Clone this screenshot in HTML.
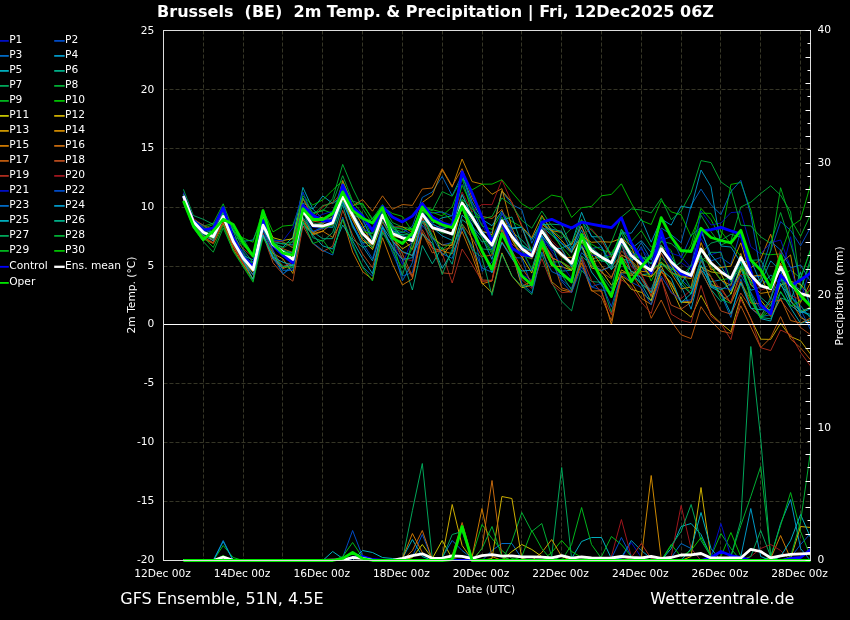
<!DOCTYPE html><html><head><meta charset="utf-8"><title>Brussels (BE) 2m Temp. &amp; Precipitation</title>
<style>html,body{margin:0;padding:0;background:#000;}svg{display:block}text{font-family:"DejaVu Sans","Liberation Sans",sans-serif;fill:#fff}svg{will-change:transform;opacity:.9999}</style></head><body>
<svg width="850" height="620" viewBox="0 0 850 620">
<rect width="850" height="620" fill="#000"/>
<path d="M203.50 30.5V560.5M243.50 30.5V560.5M282.50 30.5V560.5M322.50 30.5V560.5M362.50 30.5V560.5M402.50 30.5V560.5M442.50 30.5V560.5M482.50 30.5V560.5M521.50 30.5V560.5M561.50 30.5V560.5M601.50 30.5V560.5M641.50 30.5V560.5M681.50 30.5V560.5M720.50 30.5V560.5M760.50 30.5V560.5M800.50 30.5V560.5M163.5 501.50H810.5M163.5 442.50H810.5M163.5 383.50H810.5M163.5 266.50H810.5M163.5 207.50H810.5M163.5 148.50H810.5M163.5 89.50H810.5" stroke="#363627" stroke-width="1" stroke-dasharray="4 2" fill="none"/>
<defs><clipPath id="cp"><rect x="163.5" y="30" width="647" height="530.5"/></clipPath></defs>
<g clip-path="url(#cp)" fill="none" stroke-linejoin="round">
<path d="M183.4 196.5L193.4 221.2L203.3 232.0L213.3 236.2L223.2 216.2L233.2 241.0L243.1 255.3L253.1 268.1L263.0 223.2L273.0 243.7L282.9 254.1L292.9 259.4L302.9 212.0L312.8 227.1L322.8 228.8L332.7 226.8L342.7 202.0L352.6 224.9L362.6 243.2L372.5 242.6L382.5 211.2L392.4 229.2L402.4 236.5L412.4 237.7L422.3 210.7L432.3 219.6L442.2 227.6L452.2 223.6L462.1 184.1L472.1 203.7L482.0 224.5L492.0 243.0L501.9 229.1L511.9 256.7L521.8 274.8L531.8 279.7L541.8 235.6L551.7 249.9L561.7 255.2L571.6 265.7L581.6 234.8L591.5 251.8L601.5 258.0L611.4 253.8L621.4 244.1L631.3 251.1L641.3 268.2L651.2 276.0L661.2 252.9L671.2 268.2L681.1 262.6L691.1 269.6L701.0 238.4L711.0 254.8L720.9 251.4L730.9 290.2L740.8 254.1L750.8 282.5L760.7 279.5L770.7 285.0L780.6 277.5L790.6 236.7L800.6 285.7L810.5 303.6" stroke="#0010d0" stroke-width="0.88"/>
<path d="M183.4 560.5L193.4 560.5L203.3 560.5L213.3 560.5L223.2 560.5L233.2 560.5L243.1 560.5L253.1 560.5L263.0 560.5L273.0 560.5L282.9 560.5L292.9 560.5L302.9 560.5L312.8 560.5L322.8 560.5L332.7 560.5L342.7 560.5L352.6 560.5L362.6 560.5L372.5 560.5L382.5 560.5L392.4 560.5L402.4 560.5L412.4 560.5L422.3 560.5L432.3 560.5L442.2 560.5L452.2 560.5L462.1 560.5L472.1 560.5L482.0 560.5L492.0 560.5L501.9 560.5L511.9 560.5L521.8 560.5L531.8 560.5L541.8 560.5L551.7 560.5L561.7 560.5L571.6 560.5L581.6 560.5L591.5 560.5L601.5 560.5L611.4 560.5L621.4 558.5L631.3 542.5L641.3 557.5L651.2 560.5L661.2 560.5L671.2 560.5L681.1 560.5L691.1 560.5L701.0 560.5L711.0 560.5L720.9 560.5L730.9 560.5L740.8 560.5L750.8 560.5L760.7 560.5L770.7 560.5L780.6 560.5L790.6 560.5L800.6 560.5L810.5 560.5" stroke="#0010d0" stroke-width="0.95"/>
<path d="M183.4 197.5L193.4 222.6L203.3 232.8L213.3 239.1L223.2 216.8L233.2 242.1L243.1 258.1L253.1 271.5L263.0 231.2L273.0 245.5L282.9 253.9L292.9 259.4L302.9 219.2L312.8 232.1L322.8 226.5L332.7 227.5L342.7 201.3L352.6 224.0L362.6 242.8L372.5 258.6L382.5 225.2L392.4 252.5L402.4 276.1L412.4 272.6L422.3 225.0L432.3 238.8L442.2 245.0L452.2 242.5L462.1 206.4L472.1 224.5L482.0 271.4L492.0 262.1L501.9 242.4L511.9 257.4L521.8 258.0L531.8 287.2L541.8 243.2L551.7 255.0L561.7 279.8L571.6 288.3L581.6 258.1L591.5 287.0L601.5 290.0L611.4 291.9L621.4 261.7L631.3 262.4L641.3 246.7L651.2 270.0L661.2 240.8L671.2 236.5L681.1 257.9L691.1 235.4L701.0 227.3L711.0 260.9L720.9 257.4L730.9 264.4L740.8 231.3L750.8 277.1L760.7 276.4L770.7 251.0L780.6 221.6L790.6 230.3L800.6 245.8L810.5 227.5" stroke="#0050d0" stroke-width="0.88"/>
<path d="M183.4 560.5L193.4 560.5L203.3 560.5L213.3 560.5L223.2 560.5L233.2 560.5L243.1 560.5L253.1 560.5L263.0 560.5L273.0 560.5L282.9 560.5L292.9 560.5L302.9 560.5L312.8 560.5L322.8 560.5L332.7 560.5L342.7 557.5L352.6 530.5L362.6 556.5L372.5 560.5L382.5 560.5L392.4 560.5L402.4 560.5L412.4 556.5L422.3 534.5L432.3 559.5L442.2 560.5L452.2 560.5L462.1 560.5L472.1 560.5L482.0 560.5L492.0 560.5L501.9 560.5L511.9 560.5L521.8 560.5L531.8 560.5L541.8 560.5L551.7 560.5L561.7 560.5L571.6 560.5L581.6 560.5L591.5 560.5L601.5 560.5L611.4 560.5L621.4 560.5L631.3 560.5L641.3 560.5L651.2 560.5L661.2 560.5L671.2 560.5L681.1 560.5L691.1 560.5L701.0 560.5L711.0 560.5L720.9 560.5L730.9 560.5L740.8 560.5L750.8 560.5L760.7 560.5L770.7 560.5L780.6 560.5L790.6 557.5L800.6 544.5L810.5 533.5" stroke="#0050d0" stroke-width="0.95"/>
<path d="M183.4 196.0L193.4 221.2L203.3 231.8L213.3 235.3L223.2 215.3L233.2 239.8L243.1 258.1L253.1 262.3L263.0 222.1L273.0 246.3L282.9 252.3L292.9 252.7L302.9 209.3L312.8 219.9L322.8 218.0L332.7 219.4L342.7 195.7L352.6 212.7L362.6 229.2L372.5 237.7L382.5 213.1L392.4 231.0L402.4 232.7L412.4 226.3L422.3 197.4L432.3 192.0L442.2 176.4L452.2 195.7L462.1 174.6L472.1 206.2L482.0 232.5L492.0 232.3L501.9 191.2L511.9 204.5L521.8 209.7L531.8 243.3L541.8 221.2L551.7 232.2L561.7 243.2L571.6 249.4L581.6 226.4L591.5 248.4L601.5 246.9L611.4 268.6L621.4 244.6L631.3 262.7L641.3 284.3L651.2 289.2L661.2 264.1L671.2 267.7L681.1 279.3L691.1 288.7L701.0 259.8L711.0 283.1L720.9 294.2L730.9 317.4L740.8 278.8L750.8 308.1L760.7 316.8L770.7 314.7L780.6 279.1L790.6 283.2L800.6 315.8L810.5 326.3" stroke="#0070d0" stroke-width="0.88"/>
<path d="M183.4 560.5L193.4 560.5L203.3 560.5L213.3 560.5L223.2 540.5L233.2 560.5L243.1 560.5L253.1 560.5L263.0 560.5L273.0 560.5L282.9 560.5L292.9 560.5L302.9 560.5L312.8 560.5L322.8 560.5L332.7 560.5L342.7 560.5L352.6 560.5L362.6 560.5L372.5 560.5L382.5 560.5L392.4 560.5L402.4 560.5L412.4 560.5L422.3 560.5L432.3 560.5L442.2 560.5L452.2 560.5L462.1 560.5L472.1 560.5L482.0 560.5L492.0 550.5L501.9 543.5L511.9 543.5L521.8 558.5L531.8 560.5L541.8 560.5L551.7 560.5L561.7 560.5L571.6 560.5L581.6 560.5L591.5 560.5L601.5 560.5L611.4 560.5L621.4 560.5L631.3 560.5L641.3 560.5L651.2 560.5L661.2 560.5L671.2 557.5L681.1 543.5L691.1 548.5L701.0 560.5L711.0 560.5L720.9 560.5L730.9 560.5L740.8 560.5L750.8 560.5L760.7 560.5L770.7 560.5L780.6 560.5L790.6 560.5L800.6 560.5L810.5 560.5" stroke="#0070d0" stroke-width="0.95"/>
<path d="M183.4 194.7L193.4 219.9L203.3 225.1L213.3 233.2L223.2 209.6L233.2 231.3L243.1 241.4L253.1 240.0L263.0 215.9L273.0 241.6L282.9 243.8L292.9 245.0L302.9 202.9L312.8 209.1L322.8 219.0L332.7 212.6L342.7 191.2L352.6 213.6L362.6 228.4L372.5 218.1L382.5 208.2L392.4 230.3L402.4 237.9L412.4 236.4L422.3 214.1L432.3 227.4L442.2 235.9L452.2 240.4L462.1 206.5L472.1 226.4L482.0 237.3L492.0 259.4L501.9 221.7L511.9 237.9L521.8 245.7L531.8 250.8L541.8 227.0L551.7 235.0L561.7 243.7L571.6 252.8L581.6 230.2L591.5 251.4L601.5 261.0L611.4 262.0L621.4 229.4L631.3 248.7L641.3 240.7L651.2 252.4L661.2 237.0L671.2 262.7L681.1 286.0L691.1 309.2L701.0 269.7L711.0 281.9L720.9 279.8L730.9 291.1L740.8 267.0L750.8 290.3L760.7 287.0L770.7 274.9L780.6 285.0L790.6 296.6L800.6 305.8L810.5 318.1" stroke="#00a0d0" stroke-width="0.88"/>
<path d="M183.4 560.5L193.4 560.5L203.3 560.5L213.3 560.5L223.2 560.5L233.2 560.5L243.1 560.5L253.1 560.5L263.0 560.5L273.0 560.5L282.9 560.5L292.9 560.5L302.9 560.5L312.8 560.5L322.8 560.5L332.7 560.5L342.7 560.5L352.6 560.5L362.6 560.5L372.5 560.5L382.5 560.5L392.4 560.5L402.4 560.5L412.4 560.5L422.3 560.5L432.3 560.5L442.2 560.5L452.2 560.5L462.1 560.5L472.1 560.5L482.0 560.5L492.0 560.5L501.9 560.5L511.9 560.5L521.8 560.5L531.8 560.5L541.8 560.5L551.7 560.5L561.7 560.5L571.6 560.5L581.6 560.5L591.5 560.5L601.5 560.5L611.4 560.5L621.4 557.5L631.3 540.5L641.3 550.5L651.2 558.5L661.2 560.5L671.2 560.5L681.1 560.5L691.1 560.5L701.0 560.5L711.0 560.5L720.9 560.5L730.9 560.5L740.8 560.5L750.8 560.5L760.7 560.5L770.7 557.5L780.6 523.5L790.6 499.5L800.6 548.5L810.5 560.5" stroke="#00a0d0" stroke-width="0.95"/>
<path d="M183.4 195.7L193.4 222.6L203.3 232.7L213.3 237.2L223.2 215.2L233.2 240.2L243.1 255.7L253.1 269.4L263.0 224.2L273.0 243.6L282.9 247.1L292.9 237.1L302.9 187.4L312.8 209.0L322.8 196.0L332.7 203.5L342.7 195.6L352.6 216.4L362.6 233.7L372.5 243.4L382.5 211.7L392.4 224.9L402.4 237.7L412.4 238.6L422.3 213.3L432.3 223.1L442.2 217.8L452.2 215.7L462.1 173.7L472.1 201.7L482.0 219.3L492.0 225.7L501.9 211.0L511.9 228.9L521.8 227.3L531.8 239.5L541.8 221.3L551.7 231.5L561.7 247.9L571.6 243.8L581.6 212.3L591.5 236.7L601.5 236.9L611.4 255.6L621.4 244.2L631.3 272.8L641.3 284.0L651.2 301.1L661.2 263.8L671.2 270.3L681.1 284.9L691.1 265.2L701.0 231.4L711.0 254.6L720.9 266.5L730.9 281.7L740.8 262.0L750.8 298.8L760.7 318.6L770.7 321.0L780.6 291.8L790.6 307.9L800.6 323.4L810.5 319.7" stroke="#00b8c8" stroke-width="0.88"/>
<path d="M183.4 560.5L193.4 560.5L203.3 560.5L213.3 560.5L223.2 560.5L233.2 560.5L243.1 560.5L253.1 560.5L263.0 560.5L273.0 560.5L282.9 560.5L292.9 560.5L302.9 560.5L312.8 560.5L322.8 560.5L332.7 551.5L342.7 558.5L352.6 560.5L362.6 560.5L372.5 560.5L382.5 560.5L392.4 560.5L402.4 558.5L412.4 539.5L422.3 556.5L432.3 560.5L442.2 560.5L452.2 560.5L462.1 560.5L472.1 560.5L482.0 560.5L492.0 560.5L501.9 560.5L511.9 560.5L521.8 560.5L531.8 560.5L541.8 560.5L551.7 560.5L561.7 560.5L571.6 558.5L581.6 541.5L591.5 537.5L601.5 537.5L611.4 558.5L621.4 560.5L631.3 560.5L641.3 560.5L651.2 560.5L661.2 560.5L671.2 548.5L681.1 526.5L691.1 523.5L701.0 534.5L711.0 556.5L720.9 560.5L730.9 560.5L740.8 560.5L750.8 560.5L760.7 560.5L770.7 560.5L780.6 560.5L790.6 560.5L800.6 560.5L810.5 560.5" stroke="#00b8c8" stroke-width="0.95"/>
<path d="M183.4 194.5L193.4 219.6L203.3 227.8L213.3 234.0L223.2 215.5L233.2 240.9L243.1 257.6L253.1 269.6L263.0 228.2L273.0 252.0L282.9 274.4L292.9 264.4L302.9 217.4L312.8 231.6L322.8 238.8L332.7 238.6L342.7 204.5L352.6 239.0L362.6 247.2L372.5 244.6L382.5 215.0L392.4 233.3L402.4 259.3L412.4 290.0L422.3 245.5L432.3 263.8L442.2 247.2L452.2 264.2L462.1 219.7L472.1 227.1L482.0 242.0L492.0 240.0L501.9 221.0L511.9 231.7L521.8 239.9L531.8 251.0L541.8 225.6L551.7 244.2L561.7 271.1L571.6 270.3L581.6 241.3L591.5 259.1L601.5 256.6L611.4 269.5L621.4 258.9L631.3 261.1L641.3 274.8L651.2 273.5L661.2 245.5L671.2 263.7L681.1 284.3L691.1 294.2L701.0 271.4L711.0 289.5L720.9 301.5L730.9 294.1L740.8 268.2L750.8 293.1L760.7 317.5L770.7 318.8L780.6 297.9L790.6 301.6L800.6 310.3L810.5 316.3" stroke="#00b890" stroke-width="0.88"/>
<path d="M183.4 196.1L193.4 222.0L203.3 234.1L213.3 236.6L223.2 212.1L233.2 228.0L243.1 249.7L253.1 262.4L263.0 222.2L273.0 243.5L282.9 250.7L292.9 260.6L302.9 204.4L312.8 222.8L322.8 225.7L332.7 227.4L342.7 195.7L352.6 227.3L362.6 242.6L372.5 243.0L382.5 213.8L392.4 231.3L402.4 235.0L412.4 240.3L422.3 222.6L432.3 228.3L442.2 230.4L452.2 234.9L462.1 208.1L472.1 233.2L482.0 249.0L492.0 249.7L501.9 227.0L511.9 253.5L521.8 285.7L531.8 294.5L541.8 253.7L551.7 282.5L561.7 301.2L571.6 310.9L581.6 270.3L591.5 281.5L601.5 282.4L611.4 312.5L621.4 272.7L631.3 274.0L641.3 284.3L651.2 291.7L661.2 257.6L671.2 268.8L681.1 271.4L691.1 276.0L701.0 253.3L711.0 243.1L720.9 240.4L730.9 234.2L740.8 237.1L750.8 260.3L760.7 259.8L770.7 280.5L780.6 258.2L790.6 283.2L800.6 289.9L810.5 259.3" stroke="#00b060" stroke-width="0.88"/>
<path d="M183.4 560.5L193.4 560.5L203.3 560.5L213.3 560.5L223.2 560.5L233.2 560.5L243.1 560.5L253.1 560.5L263.0 560.5L273.0 560.5L282.9 560.5L292.9 560.5L302.9 560.5L312.8 560.5L322.8 560.5L332.7 560.5L342.7 560.5L352.6 560.5L362.6 560.5L372.5 560.5L382.5 560.5L392.4 560.5L402.4 560.5L412.4 510.5L422.3 463.5L432.3 558.5L442.2 560.5L452.2 560.5L462.1 560.5L472.1 560.5L482.0 560.5L492.0 560.5L501.9 560.5L511.9 560.5L521.8 560.5L531.8 560.5L541.8 560.5L551.7 556.5L561.7 467.5L571.6 558.5L581.6 560.5L591.5 560.5L601.5 560.5L611.4 560.5L621.4 560.5L631.3 560.5L641.3 560.5L651.2 560.5L661.2 560.5L671.2 560.5L681.1 560.5L691.1 560.5L701.0 560.5L711.0 560.5L720.9 560.5L730.9 556.5L740.8 520.5L750.8 346.5L760.7 438.5L770.7 556.5L780.6 560.5L790.6 560.5L800.6 560.5L810.5 560.5" stroke="#00b060" stroke-width="0.95"/>
<path d="M183.4 201.9L193.4 228.0L203.3 241.6L213.3 252.2L223.2 228.0L233.2 250.3L243.1 265.7L253.1 280.9L263.0 230.0L273.0 242.7L282.9 248.0L292.9 241.8L302.9 192.0L312.8 215.3L322.8 205.6L332.7 202.8L342.7 175.7L352.6 201.0L362.6 204.5L372.5 218.7L382.5 204.5L392.4 222.5L402.4 227.1L412.4 228.7L422.3 207.4L432.3 210.6L442.2 191.6L452.2 196.2L462.1 178.2L472.1 213.5L482.0 234.8L492.0 251.9L501.9 223.2L511.9 237.8L521.8 245.3L531.8 251.6L541.8 217.1L551.7 229.8L561.7 238.2L571.6 228.2L581.6 220.3L591.5 230.1L601.5 241.0L611.4 255.7L621.4 232.9L631.3 255.0L641.3 258.4L651.2 256.4L661.2 241.2L671.2 243.6L681.1 252.1L691.1 250.0L701.0 215.3L711.0 231.7L720.9 245.0L730.9 240.9L740.8 207.0L750.8 202.2L760.7 193.5L770.7 185.8L780.6 195.2L790.6 211.9L800.6 288.7L810.5 262.9" stroke="#00b838" stroke-width="0.88"/>
<path d="M183.4 560.5L193.4 560.5L203.3 560.5L213.3 560.5L223.2 560.5L233.2 560.5L243.1 560.5L253.1 560.5L263.0 560.5L273.0 560.5L282.9 560.5L292.9 560.5L302.9 560.5L312.8 560.5L322.8 560.5L332.7 560.5L342.7 560.5L352.6 560.5L362.6 560.5L372.5 560.5L382.5 560.5L392.4 560.5L402.4 560.5L412.4 560.5L422.3 560.5L432.3 560.5L442.2 560.5L452.2 560.5L462.1 560.5L472.1 560.5L482.0 560.5L492.0 560.5L501.9 560.5L511.9 541.5L521.8 512.5L531.8 531.5L541.8 523.5L551.7 556.5L561.7 560.5L571.6 560.5L581.6 560.5L591.5 560.5L601.5 560.5L611.4 560.5L621.4 560.5L631.3 560.5L641.3 560.5L651.2 560.5L661.2 560.5L671.2 560.5L681.1 560.5L691.1 560.5L701.0 560.5L711.0 560.5L720.9 560.5L730.9 556.5L740.8 525.5L750.8 496.5L760.7 466.5L770.7 556.5L780.6 560.5L790.6 560.5L800.6 560.5L810.5 560.5" stroke="#00b838" stroke-width="0.95"/>
<path d="M183.4 195.2L193.4 220.6L203.3 226.3L213.3 223.2L223.2 203.8L233.2 230.0L243.1 245.5L253.1 254.3L263.0 217.8L273.0 239.8L282.9 241.9L292.9 247.8L302.9 208.0L312.8 214.1L322.8 209.8L332.7 213.5L342.7 182.0L352.6 201.6L362.6 214.0L372.5 238.6L382.5 207.4L392.4 227.5L402.4 237.1L412.4 241.2L422.3 209.9L432.3 229.3L442.2 230.0L452.2 224.0L462.1 194.6L472.1 216.1L482.0 218.1L492.0 237.1L501.9 217.0L511.9 237.0L521.8 255.2L531.8 259.0L541.8 231.1L551.7 246.7L561.7 257.2L571.6 265.3L581.6 245.8L591.5 262.1L601.5 259.8L611.4 265.4L621.4 229.2L631.3 241.4L641.3 230.6L651.2 247.0L661.2 241.5L671.2 250.5L681.1 280.6L691.1 293.5L701.0 260.8L711.0 276.4L720.9 299.1L730.9 303.4L740.8 282.2L750.8 299.3L760.7 317.8L770.7 305.3L780.6 277.1L790.6 270.1L800.6 278.1L810.5 249.5" stroke="#00c020" stroke-width="0.88"/>
<path d="M183.4 560.5L193.4 560.5L203.3 560.5L213.3 560.5L223.2 545.5L233.2 557.5L243.1 560.5L253.1 560.5L263.0 560.5L273.0 560.5L282.9 560.5L292.9 560.5L302.9 560.5L312.8 560.5L322.8 560.5L332.7 560.5L342.7 556.5L352.6 542.5L362.6 557.5L372.5 560.5L382.5 560.5L392.4 560.5L402.4 560.5L412.4 560.5L422.3 560.5L432.3 560.5L442.2 560.5L452.2 560.5L462.1 560.5L472.1 556.5L482.0 524.5L492.0 538.5L501.9 550.5L511.9 558.5L521.8 560.5L531.8 560.5L541.8 560.5L551.7 560.5L561.7 560.5L571.6 544.5L581.6 507.5L591.5 544.5L601.5 558.5L611.4 560.5L621.4 560.5L631.3 560.5L641.3 560.5L651.2 560.5L661.2 560.5L671.2 560.5L681.1 560.5L691.1 560.5L701.0 560.5L711.0 556.5L720.9 533.5L730.9 548.5L740.8 560.5L750.8 560.5L760.7 560.5L770.7 556.5L780.6 525.5L790.6 492.5L800.6 531.5L810.5 556.5" stroke="#00c020" stroke-width="0.95"/>
<path d="M183.4 194.9L193.4 220.8L203.3 228.6L213.3 224.5L223.2 211.6L233.2 231.0L243.1 238.0L253.1 242.2L263.0 209.7L273.0 231.9L282.9 226.1L292.9 225.1L302.9 196.0L312.8 205.0L322.8 199.9L332.7 190.0L342.7 180.6L352.6 205.5L362.6 203.2L372.5 220.3L382.5 206.7L392.4 213.5L402.4 216.4L412.4 231.5L422.3 205.8L432.3 209.7L442.2 212.2L452.2 220.4L462.1 185.3L472.1 206.2L482.0 225.9L492.0 229.4L501.9 213.1L511.9 221.5L521.8 227.0L531.8 250.6L541.8 222.8L551.7 234.4L561.7 246.6L571.6 258.3L581.6 235.5L591.5 244.1L601.5 250.1L611.4 252.6L621.4 238.8L631.3 251.2L641.3 258.9L651.2 281.0L661.2 261.9L671.2 269.9L681.1 261.7L691.1 244.8L701.0 208.4L711.0 219.7L720.9 238.2L730.9 184.4L740.8 182.5L750.8 210.1L760.7 253.4L770.7 254.7L780.6 253.9L790.6 226.8L800.6 219.6L810.5 184.8" stroke="#00cc00" stroke-width="0.88"/>
<path d="M183.4 560.5L193.4 560.5L203.3 560.5L213.3 560.5L223.2 555.5L233.2 560.5L243.1 560.5L253.1 560.5L263.0 560.5L273.0 560.5L282.9 560.5L292.9 560.5L302.9 560.5L312.8 560.5L322.8 560.5L332.7 560.5L342.7 560.5L352.6 560.5L362.6 560.5L372.5 560.5L382.5 560.5L392.4 560.5L402.4 560.5L412.4 560.5L422.3 560.5L432.3 560.5L442.2 560.5L452.2 560.5L462.1 560.5L472.1 560.5L482.0 560.5L492.0 560.5L501.9 560.5L511.9 560.5L521.8 560.5L531.8 560.5L541.8 560.5L551.7 552.5L561.7 540.5L571.6 551.5L581.6 557.5L591.5 560.5L601.5 560.5L611.4 560.5L621.4 560.5L631.3 560.5L641.3 560.5L651.2 560.5L661.2 560.5L671.2 560.5L681.1 560.5L691.1 560.5L701.0 560.5L711.0 560.5L720.9 556.5L730.9 532.5L740.8 556.5L750.8 560.5L760.7 560.5L770.7 560.5L780.6 560.5L790.6 560.5L800.6 560.5L810.5 560.5" stroke="#00cc00" stroke-width="0.95"/>
<path d="M183.4 199.3L193.4 224.7L203.3 237.1L213.3 242.9L223.2 218.3L233.2 242.3L243.1 255.5L253.1 267.7L263.0 215.6L273.0 237.7L282.9 240.5L292.9 238.7L302.9 198.6L312.8 216.9L322.8 217.9L332.7 222.8L342.7 200.2L352.6 219.9L362.6 239.7L372.5 249.6L382.5 222.0L392.4 236.6L402.4 237.3L412.4 238.8L422.3 209.8L432.3 216.8L442.2 221.3L452.2 228.8L462.1 202.4L472.1 219.0L482.0 232.8L492.0 245.2L501.9 220.4L511.9 239.4L521.8 256.6L531.8 273.1L541.8 238.5L551.7 257.6L561.7 262.6L571.6 270.3L581.6 245.1L591.5 267.9L601.5 270.8L611.4 285.0L621.4 276.6L631.3 289.3L641.3 292.4L651.2 300.5L661.2 270.7L671.2 284.1L681.1 302.2L691.1 302.8L701.0 266.7L711.0 271.9L720.9 273.4L730.9 294.1L740.8 268.0L750.8 279.0L760.7 300.1L770.7 312.4L780.6 285.0L790.6 281.4L800.6 284.4L810.5 297.0" stroke="#d0d000" stroke-width="0.88"/>
<path d="M183.4 560.5L193.4 560.5L203.3 560.5L213.3 560.5L223.2 560.5L233.2 560.5L243.1 560.5L253.1 560.5L263.0 560.5L273.0 560.5L282.9 560.5L292.9 560.5L302.9 560.5L312.8 560.5L322.8 560.5L332.7 560.5L342.7 560.5L352.6 560.5L362.6 560.5L372.5 560.5L382.5 560.5L392.4 560.5L402.4 560.5L412.4 557.5L422.3 544.5L432.3 558.5L442.2 540.5L452.2 558.5L462.1 560.5L472.1 560.5L482.0 560.5L492.0 560.5L501.9 560.5L511.9 551.5L521.8 544.5L531.8 549.5L541.8 556.5L551.7 560.5L561.7 560.5L571.6 560.5L581.6 560.5L591.5 560.5L601.5 560.5L611.4 560.5L621.4 560.5L631.3 560.5L641.3 560.5L651.2 560.5L661.2 560.5L671.2 560.5L681.1 560.5L691.1 560.5L701.0 560.5L711.0 560.5L720.9 560.5L730.9 560.5L740.8 560.5L750.8 560.5L760.7 560.5L770.7 560.5L780.6 560.5L790.6 560.5L800.6 560.5L810.5 560.5" stroke="#d0d000" stroke-width="0.95"/>
<path d="M183.4 198.6L193.4 224.2L203.3 232.3L213.3 234.8L223.2 216.4L233.2 242.7L243.1 260.5L253.1 271.2L263.0 225.3L273.0 243.8L282.9 252.1L292.9 260.3L302.9 205.5L312.8 225.1L322.8 223.7L332.7 217.2L342.7 188.5L352.6 208.0L362.6 225.3L372.5 245.0L382.5 217.0L392.4 237.5L402.4 248.9L412.4 242.8L422.3 213.8L432.3 228.1L442.2 255.8L452.2 243.3L462.1 206.1L472.1 240.7L482.0 283.0L492.0 292.7L501.9 252.9L511.9 276.0L521.8 287.7L531.8 285.2L541.8 245.1L551.7 266.0L561.7 266.6L571.6 270.3L581.6 241.9L591.5 253.7L601.5 280.1L611.4 297.4L621.4 269.9L631.3 275.7L641.3 265.2L651.2 276.8L661.2 265.7L671.2 287.6L681.1 309.3L691.1 317.2L701.0 295.3L711.0 313.9L720.9 323.4L730.9 331.6L740.8 296.6L750.8 318.7L760.7 339.2L770.7 339.4L780.6 323.4L790.6 336.6L800.6 340.8L810.5 354.0" stroke="#d8b800" stroke-width="0.88"/>
<path d="M183.4 560.5L193.4 560.5L203.3 560.5L213.3 560.5L223.2 560.5L233.2 560.5L243.1 560.5L253.1 560.5L263.0 560.5L273.0 560.5L282.9 560.5L292.9 560.5L302.9 560.5L312.8 560.5L322.8 560.5L332.7 560.5L342.7 560.5L352.6 560.5L362.6 560.5L372.5 560.5L382.5 560.5L392.4 560.5L402.4 560.5L412.4 560.5L422.3 560.5L432.3 560.5L442.2 557.5L452.2 504.5L462.1 545.5L472.1 559.5L482.0 560.5L492.0 558.5L501.9 496.5L511.9 498.5L521.8 558.5L531.8 560.5L541.8 560.5L551.7 560.5L561.7 560.5L571.6 560.5L581.6 560.5L591.5 560.5L601.5 560.5L611.4 560.5L621.4 560.5L631.3 560.5L641.3 560.5L651.2 560.5L661.2 560.5L671.2 560.5L681.1 560.5L691.1 556.5L701.0 487.5L711.0 558.5L720.9 560.5L730.9 560.5L740.8 560.5L750.8 560.5L760.7 560.5L770.7 560.5L780.6 560.5L790.6 558.5L800.6 526.5L810.5 527.5" stroke="#d8b800" stroke-width="0.95"/>
<path d="M183.4 197.5L193.4 221.8L203.3 232.3L213.3 236.8L223.2 216.6L233.2 245.3L243.1 262.7L253.1 272.1L263.0 236.4L273.0 253.3L282.9 258.9L292.9 273.5L302.9 221.7L312.8 233.8L322.8 231.1L332.7 222.8L342.7 191.6L352.6 214.1L362.6 231.9L372.5 248.1L382.5 215.4L392.4 232.9L402.4 237.9L412.4 249.4L422.3 218.1L432.3 237.4L442.2 245.0L452.2 245.4L462.1 204.0L472.1 216.4L482.0 231.0L492.0 234.7L501.9 190.7L511.9 202.3L521.8 226.4L531.8 237.7L541.8 215.4L551.7 230.8L561.7 240.5L571.6 252.2L581.6 235.8L591.5 242.3L601.5 241.7L611.4 242.2L621.4 238.1L631.3 246.0L641.3 274.7L651.2 277.0L661.2 244.8L671.2 265.3L681.1 276.9L691.1 278.6L701.0 247.8L711.0 269.9L720.9 267.5L730.9 266.1L740.8 242.8L750.8 276.3L760.7 275.1L770.7 299.3L780.6 263.4L790.6 254.9L800.6 312.4L810.5 307.1" stroke="#d8a000" stroke-width="0.88"/>
<path d="M183.4 560.5L193.4 560.5L203.3 560.5L213.3 560.5L223.2 560.5L233.2 560.5L243.1 560.5L253.1 560.5L263.0 560.5L273.0 560.5L282.9 560.5L292.9 560.5L302.9 560.5L312.8 560.5L322.8 560.5L332.7 560.5L342.7 560.5L352.6 560.5L362.6 560.5L372.5 560.5L382.5 560.5L392.4 560.5L402.4 560.5L412.4 560.5L422.3 560.5L432.3 560.5L442.2 560.5L452.2 560.5L462.1 560.5L472.1 560.5L482.0 560.5L492.0 560.5L501.9 560.5L511.9 560.5L521.8 560.5L531.8 560.5L541.8 552.5L551.7 539.5L561.7 556.5L571.6 560.5L581.6 560.5L591.5 560.5L601.5 560.5L611.4 560.5L621.4 560.5L631.3 560.5L641.3 560.5L651.2 560.5L661.2 560.5L671.2 560.5L681.1 560.5L691.1 560.5L701.0 560.5L711.0 560.5L720.9 560.5L730.9 560.5L740.8 560.5L750.8 560.5L760.7 560.5L770.7 560.5L780.6 560.5L790.6 560.5L800.6 560.5L810.5 560.5" stroke="#d8a000" stroke-width="0.95"/>
<path d="M183.4 195.1L193.4 221.3L203.3 231.6L213.3 241.2L223.2 216.5L233.2 239.6L243.1 255.1L253.1 269.7L263.0 225.0L273.0 244.9L282.9 251.1L292.9 255.4L302.9 205.5L312.8 226.5L322.8 226.7L332.7 224.9L342.7 197.9L352.6 215.5L362.6 233.0L372.5 240.9L382.5 214.2L392.4 227.2L402.4 226.8L412.4 232.2L422.3 202.5L432.3 195.3L442.2 169.8L452.2 187.2L462.1 159.0L472.1 181.6L482.0 184.1L492.0 194.3L501.9 188.6L511.9 228.0L521.8 248.8L531.8 251.3L541.8 224.5L551.7 230.7L561.7 232.4L571.6 244.9L581.6 226.0L591.5 250.5L601.5 265.7L611.4 277.3L621.4 254.8L631.3 260.3L641.3 271.3L651.2 272.3L661.2 262.2L671.2 273.3L681.1 288.9L691.1 287.0L701.0 242.6L711.0 267.3L720.9 280.2L730.9 285.4L740.8 253.3L750.8 285.1L760.7 293.4L770.7 291.8L780.6 263.4L790.6 281.3L800.6 302.4L810.5 282.6" stroke="#d89000" stroke-width="0.88"/>
<path d="M183.4 560.5L193.4 560.5L203.3 560.5L213.3 560.5L223.2 560.5L233.2 560.5L243.1 560.5L253.1 560.5L263.0 560.5L273.0 560.5L282.9 560.5L292.9 560.5L302.9 560.5L312.8 560.5L322.8 560.5L332.7 560.5L342.7 560.5L352.6 560.5L362.6 560.5L372.5 560.5L382.5 560.5L392.4 560.5L402.4 560.5L412.4 560.5L422.3 560.5L432.3 560.5L442.2 560.5L452.2 560.5L462.1 560.5L472.1 560.5L482.0 560.5L492.0 560.5L501.9 560.5L511.9 560.5L521.8 560.5L531.8 560.5L541.8 560.5L551.7 560.5L561.7 560.5L571.6 560.5L581.6 560.5L591.5 560.5L601.5 560.5L611.4 560.5L621.4 560.5L631.3 560.5L641.3 558.5L651.2 475.5L661.2 558.5L671.2 560.5L681.1 560.5L691.1 560.5L701.0 560.5L711.0 560.5L720.9 560.5L730.9 560.5L740.8 560.5L750.8 560.5L760.7 560.5L770.7 560.5L780.6 560.5L790.6 560.5L800.6 560.5L810.5 560.5" stroke="#d89000" stroke-width="0.95"/>
<path d="M183.4 196.9L193.4 225.0L203.3 238.8L213.3 243.5L223.2 223.7L233.2 248.7L243.1 264.4L253.1 279.0L263.0 233.6L273.0 259.3L282.9 268.6L292.9 264.5L302.9 219.3L312.8 235.0L322.8 231.2L332.7 237.4L342.7 219.0L352.6 252.0L362.6 271.6L372.5 279.5L382.5 237.7L392.4 263.8L402.4 285.0L412.4 278.9L422.3 233.6L432.3 248.1L442.2 250.7L452.2 253.9L462.1 231.6L472.1 255.8L482.0 283.8L492.0 281.0L501.9 229.7L511.9 251.3L521.8 286.2L531.8 281.3L541.8 246.0L551.7 281.7L561.7 290.0L571.6 292.2L581.6 263.2L591.5 291.0L601.5 290.8L611.4 324.5L621.4 275.7L631.3 282.4L641.3 298.4L651.2 304.5L661.2 272.1L671.2 282.6L681.1 301.5L691.1 301.9L701.0 266.7L711.0 277.2L720.9 295.1L730.9 302.2L740.8 270.9L750.8 268.0L760.7 259.1L770.7 234.2L780.6 266.2L790.6 299.6L800.6 317.5L810.5 322.5" stroke="#d88000" stroke-width="0.88"/>
<path d="M183.4 560.5L193.4 560.5L203.3 560.5L213.3 560.5L223.2 560.5L233.2 560.5L243.1 560.5L253.1 560.5L263.0 560.5L273.0 560.5L282.9 560.5L292.9 560.5L302.9 560.5L312.8 560.5L322.8 560.5L332.7 560.5L342.7 560.5L352.6 560.5L362.6 560.5L372.5 560.5L382.5 560.5L392.4 560.5L402.4 558.5L412.4 533.5L422.3 552.5L432.3 560.5L442.2 560.5L452.2 560.5L462.1 560.5L472.1 556.5L482.0 508.5L492.0 556.5L501.9 560.5L511.9 560.5L521.8 560.5L531.8 560.5L541.8 560.5L551.7 560.5L561.7 560.5L571.6 560.5L581.6 560.5L591.5 560.5L601.5 560.5L611.4 560.5L621.4 560.5L631.3 560.5L641.3 560.5L651.2 560.5L661.2 560.5L671.2 560.5L681.1 560.5L691.1 560.5L701.0 560.5L711.0 560.5L720.9 560.5L730.9 560.5L740.8 560.5L750.8 560.5L760.7 560.5L770.7 558.5L780.6 535.5L790.6 558.5L800.6 560.5L810.5 560.5" stroke="#d88000" stroke-width="0.95"/>
<path d="M183.4 201.6L193.4 223.5L203.3 235.9L213.3 240.4L223.2 222.1L233.2 246.4L243.1 263.3L253.1 279.1L263.0 235.6L273.0 256.3L282.9 267.9L292.9 261.0L302.9 225.9L312.8 232.6L322.8 228.4L332.7 221.9L342.7 180.5L352.6 206.0L362.6 199.6L372.5 211.2L382.5 195.8L392.4 209.3L402.4 204.5L412.4 205.4L422.3 189.0L432.3 188.0L442.2 168.7L452.2 186.1L462.1 168.7L472.1 197.9L482.0 216.4L492.0 218.5L501.9 209.4L511.9 240.2L521.8 257.2L531.8 254.4L541.8 230.4L551.7 246.1L561.7 257.2L571.6 257.6L581.6 246.6L591.5 265.9L601.5 270.1L611.4 266.5L621.4 255.6L631.3 271.6L641.3 273.6L651.2 296.7L661.2 252.9L671.2 272.6L681.1 276.2L691.1 276.8L701.0 256.1L711.0 284.6L720.9 287.6L730.9 303.3L740.8 281.6L750.8 303.1L760.7 303.9L770.7 316.4L780.6 298.3L790.6 320.5L800.6 323.0L810.5 318.1" stroke="#d07010" stroke-width="0.88"/>
<path d="M183.4 560.5L193.4 560.5L203.3 560.5L213.3 560.5L223.2 560.5L233.2 560.5L243.1 560.5L253.1 560.5L263.0 560.5L273.0 560.5L282.9 560.5L292.9 560.5L302.9 560.5L312.8 560.5L322.8 560.5L332.7 560.5L342.7 560.5L352.6 560.5L362.6 560.5L372.5 560.5L382.5 560.5L392.4 560.5L402.4 560.5L412.4 550.5L422.3 530.5L432.3 559.5L442.2 560.5L452.2 560.5L462.1 560.5L472.1 560.5L482.0 548.5L492.0 480.5L501.9 556.5L511.9 560.5L521.8 560.5L531.8 560.5L541.8 560.5L551.7 560.5L561.7 560.5L571.6 560.5L581.6 560.5L591.5 560.5L601.5 560.5L611.4 560.5L621.4 560.5L631.3 560.5L641.3 560.5L651.2 560.5L661.2 560.5L671.2 560.5L681.1 560.5L691.1 560.5L701.0 560.5L711.0 560.5L720.9 560.5L730.9 560.5L740.8 560.5L750.8 560.5L760.7 560.5L770.7 560.5L780.6 560.5L790.6 560.5L800.6 560.5L810.5 560.5" stroke="#d07010" stroke-width="0.95"/>
<path d="M183.4 194.6L193.4 221.6L203.3 232.0L213.3 236.8L223.2 216.4L233.2 238.2L243.1 258.1L253.1 266.8L263.0 225.9L273.0 246.7L282.9 248.7L292.9 252.5L302.9 208.1L312.8 221.1L322.8 222.7L332.7 216.6L342.7 195.8L352.6 218.6L362.6 240.1L372.5 244.3L382.5 215.3L392.4 236.1L402.4 253.8L412.4 276.4L422.3 232.5L432.3 252.9L442.2 250.0L452.2 247.5L462.1 223.9L472.1 238.3L482.0 256.8L492.0 255.0L501.9 224.4L511.9 250.8L521.8 268.0L531.8 282.2L541.8 239.8L551.7 255.6L561.7 287.9L571.6 291.3L581.6 260.2L591.5 290.2L601.5 297.0L611.4 320.6L621.4 272.6L631.3 273.0L641.3 288.9L651.2 318.3L661.2 300.0L671.2 321.2L681.1 334.8L691.1 338.6L701.0 306.7L711.0 321.2L720.9 331.0L730.9 333.4L740.8 305.8L750.8 327.0L760.7 347.6L770.7 337.8L780.6 316.6L790.6 339.0L800.6 347.9L810.5 359.8" stroke="#c86010" stroke-width="0.88"/>
<path d="M183.4 560.5L193.4 560.5L203.3 560.5L213.3 560.5L223.2 560.5L233.2 560.5L243.1 560.5L253.1 560.5L263.0 560.5L273.0 560.5L282.9 560.5L292.9 560.5L302.9 560.5L312.8 560.5L322.8 560.5L332.7 560.5L342.7 560.5L352.6 560.5L362.6 560.5L372.5 560.5L382.5 560.5L392.4 560.5L402.4 560.5L412.4 560.5L422.3 560.5L432.3 560.5L442.2 560.5L452.2 555.5L462.1 522.5L472.1 558.5L482.0 560.5L492.0 560.5L501.9 560.5L511.9 560.5L521.8 560.5L531.8 560.5L541.8 560.5L551.7 560.5L561.7 560.5L571.6 560.5L581.6 560.5L591.5 560.5L601.5 560.5L611.4 560.5L621.4 560.5L631.3 560.5L641.3 560.5L651.2 560.5L661.2 560.5L671.2 560.5L681.1 560.5L691.1 560.5L701.0 560.5L711.0 560.5L720.9 560.5L730.9 560.5L740.8 560.5L750.8 560.5L760.7 560.5L770.7 560.5L780.6 560.5L790.6 560.5L800.6 560.5L810.5 560.5" stroke="#c86010" stroke-width="0.95"/>
<path d="M183.4 196.3L193.4 222.5L203.3 233.0L213.3 239.2L223.2 217.4L233.2 245.2L243.1 262.6L253.1 274.8L263.0 234.9L273.0 262.8L282.9 274.1L292.9 281.2L302.9 226.1L312.8 243.4L322.8 251.6L332.7 246.2L342.7 210.3L352.6 234.9L362.6 254.0L372.5 267.7L382.5 230.4L392.4 246.4L402.4 259.4L412.4 277.7L422.3 229.7L432.3 247.7L442.2 272.8L452.2 273.9L462.1 226.8L472.1 249.6L482.0 280.0L492.0 280.4L501.9 230.9L511.9 244.1L521.8 251.4L531.8 258.7L541.8 239.9L551.7 257.9L561.7 262.1L571.6 267.7L581.6 237.8L591.5 259.8L601.5 272.6L611.4 278.5L621.4 250.8L631.3 261.0L641.3 279.2L651.2 295.5L661.2 279.0L671.2 305.1L681.1 309.3L691.1 302.2L701.0 270.6L711.0 290.5L720.9 310.9L730.9 314.2L740.8 293.0L750.8 307.9L760.7 315.6L770.7 301.7L780.6 300.2L790.6 313.1L800.6 327.6L810.5 334.7" stroke="#c05020" stroke-width="0.88"/>
<path d="M183.4 193.1L193.4 218.5L203.3 225.5L213.3 229.4L223.2 212.2L233.2 236.6L243.1 248.6L253.1 256.9L263.0 221.0L273.0 240.8L282.9 241.8L292.9 247.7L302.9 198.1L312.8 218.9L322.8 206.5L332.7 202.7L342.7 191.6L352.6 211.0L362.6 231.3L372.5 242.4L382.5 216.1L392.4 239.9L402.4 252.4L412.4 255.5L422.3 218.7L432.3 247.9L442.2 253.1L452.2 283.0L462.1 249.0L472.1 264.5L482.0 281.4L492.0 280.9L501.9 241.6L511.9 257.0L521.8 279.6L531.8 288.3L541.8 258.7L551.7 283.8L561.7 292.7L571.6 291.8L581.6 256.3L591.5 280.3L601.5 292.7L611.4 314.7L621.4 279.7L631.3 286.5L641.3 302.0L651.2 313.5L661.2 278.0L671.2 314.1L681.1 320.1L691.1 322.9L701.0 285.4L711.0 316.2L720.9 323.7L730.9 339.6L740.8 299.2L750.8 318.3L760.7 347.7L770.7 350.6L780.6 330.0L790.6 334.7L800.6 352.5L810.5 366.0" stroke="#b83020" stroke-width="0.88"/>
<path d="M183.4 560.5L193.4 560.5L203.3 560.5L213.3 560.5L223.2 560.5L233.2 560.5L243.1 560.5L253.1 560.5L263.0 560.5L273.0 560.5L282.9 560.5L292.9 560.5L302.9 560.5L312.8 560.5L322.8 560.5L332.7 560.5L342.7 560.5L352.6 560.5L362.6 560.5L372.5 560.5L382.5 560.5L392.4 560.5L402.4 560.5L412.4 560.5L422.3 560.5L432.3 560.5L442.2 560.5L452.2 560.5L462.1 560.5L472.1 560.5L482.0 560.5L492.0 560.5L501.9 560.5L511.9 560.5L521.8 560.5L531.8 560.5L541.8 560.5L551.7 560.5L561.7 560.5L571.6 560.5L581.6 560.5L591.5 560.5L601.5 560.5L611.4 560.5L621.4 560.5L631.3 557.5L641.3 543.5L651.2 558.5L661.2 560.5L671.2 560.5L681.1 560.5L691.1 560.5L701.0 560.5L711.0 560.5L720.9 560.5L730.9 560.5L740.8 560.5L750.8 560.5L760.7 560.5L770.7 560.5L780.6 560.5L790.6 560.5L800.6 560.5L810.5 560.5" stroke="#b83020" stroke-width="0.95"/>
<path d="M183.4 194.7L193.4 222.7L203.3 236.6L213.3 242.8L223.2 218.0L233.2 244.3L243.1 263.1L253.1 274.8L263.0 233.6L273.0 251.0L282.9 266.5L292.9 262.2L302.9 213.3L312.8 223.8L322.8 225.5L332.7 225.2L342.7 196.0L352.6 214.5L362.6 234.6L372.5 243.6L382.5 221.7L392.4 239.7L402.4 257.9L412.4 261.0L422.3 222.6L432.3 231.6L442.2 223.8L452.2 224.4L462.1 192.1L472.1 211.6L482.0 204.4L492.0 204.7L501.9 180.0L511.9 202.7L521.8 225.3L531.8 256.8L541.8 225.5L551.7 240.7L561.7 250.4L571.6 264.4L581.6 234.5L591.5 228.9L601.5 240.0L611.4 258.1L621.4 244.1L631.3 266.8L641.3 274.3L651.2 292.0L661.2 268.8L671.2 293.0L681.1 298.6L691.1 290.1L701.0 261.0L711.0 276.8L720.9 289.9L730.9 302.6L740.8 274.7L750.8 274.4L760.7 290.2L770.7 286.8L780.6 249.3L790.6 295.1L800.6 300.0L810.5 287.8" stroke="#a81820" stroke-width="0.88"/>
<path d="M183.4 560.5L193.4 560.5L203.3 560.5L213.3 560.5L223.2 560.5L233.2 560.5L243.1 560.5L253.1 560.5L263.0 560.5L273.0 560.5L282.9 560.5L292.9 560.5L302.9 560.5L312.8 560.5L322.8 560.5L332.7 560.5L342.7 560.5L352.6 560.5L362.6 560.5L372.5 560.5L382.5 560.5L392.4 560.5L402.4 560.5L412.4 560.5L422.3 560.5L432.3 560.5L442.2 560.5L452.2 560.5L462.1 560.5L472.1 560.5L482.0 560.5L492.0 560.5L501.9 560.5L511.9 560.5L521.8 560.5L531.8 560.5L541.8 560.5L551.7 560.5L561.7 560.5L571.6 560.5L581.6 560.5L591.5 560.5L601.5 560.5L611.4 556.5L621.4 519.5L631.3 556.5L641.3 560.5L651.2 560.5L661.2 560.5L671.2 556.5L681.1 505.5L691.1 548.5L701.0 560.5L711.0 560.5L720.9 560.5L730.9 560.5L740.8 560.5L750.8 556.5L760.7 548.5L770.7 544.5L780.6 550.5L790.6 560.5L800.6 560.5L810.5 560.5" stroke="#a81820" stroke-width="0.95"/>
<path d="M183.4 192.4L193.4 219.7L203.3 227.3L213.3 234.0L223.2 216.4L233.2 241.3L243.1 251.1L253.1 266.6L263.0 223.8L273.0 240.1L282.9 240.8L292.9 227.7L302.9 192.2L312.8 218.6L322.8 214.3L332.7 211.2L342.7 188.2L352.6 210.7L362.6 220.8L372.5 240.3L382.5 216.1L392.4 239.9L402.4 264.5L412.4 239.4L422.3 212.0L432.3 223.2L442.2 230.5L452.2 233.2L462.1 202.0L472.1 217.1L482.0 236.2L492.0 243.3L501.9 212.3L511.9 230.1L521.8 250.9L531.8 270.2L541.8 237.6L551.7 251.3L561.7 264.8L571.6 278.6L581.6 245.2L591.5 255.1L601.5 256.2L611.4 263.8L621.4 243.3L631.3 256.1L641.3 249.2L651.2 260.0L661.2 238.6L671.2 253.2L681.1 256.5L691.1 268.0L701.0 210.9L711.0 225.0L720.9 223.0L730.9 212.6L740.8 211.8L750.8 246.8L760.7 253.9L770.7 242.7L780.6 240.0L790.6 267.7L800.6 299.8L810.5 268.1" stroke="#0010d0" stroke-width="0.88"/>
<path d="M183.4 560.5L193.4 560.5L203.3 560.5L213.3 560.5L223.2 560.5L233.2 560.5L243.1 560.5L253.1 560.5L263.0 560.5L273.0 560.5L282.9 560.5L292.9 560.5L302.9 560.5L312.8 560.5L322.8 560.5L332.7 560.5L342.7 560.5L352.6 560.5L362.6 560.5L372.5 560.5L382.5 560.5L392.4 560.5L402.4 560.5L412.4 560.5L422.3 560.5L432.3 560.5L442.2 560.5L452.2 560.5L462.1 560.5L472.1 560.5L482.0 560.5L492.0 560.5L501.9 560.5L511.9 560.5L521.8 560.5L531.8 560.5L541.8 560.5L551.7 560.5L561.7 560.5L571.6 560.5L581.6 560.5L591.5 560.5L601.5 560.5L611.4 560.5L621.4 560.5L631.3 560.5L641.3 560.5L651.2 560.5L661.2 560.5L671.2 560.5L681.1 560.5L691.1 560.5L701.0 560.5L711.0 556.5L720.9 523.5L730.9 556.5L740.8 560.5L750.8 560.5L760.7 560.5L770.7 560.5L780.6 560.5L790.6 560.5L800.6 560.5L810.5 560.5" stroke="#0010d0" stroke-width="0.95"/>
<path d="M183.4 196.1L193.4 221.2L203.3 231.1L213.3 236.6L223.2 215.5L233.2 241.9L243.1 259.7L253.1 270.6L263.0 229.4L273.0 257.5L282.9 273.7L292.9 267.4L302.9 212.3L312.8 231.2L322.8 228.2L332.7 223.9L342.7 193.1L352.6 212.9L362.6 228.9L372.5 233.3L382.5 212.7L392.4 226.8L402.4 228.9L412.4 234.7L422.3 208.9L432.3 213.0L442.2 212.0L452.2 216.0L462.1 203.6L472.1 215.0L482.0 232.1L492.0 249.4L501.9 213.6L511.9 231.3L521.8 246.8L531.8 251.8L541.8 235.4L551.7 262.4L561.7 281.3L571.6 292.7L581.6 266.8L591.5 286.8L601.5 283.3L611.4 306.7L621.4 273.3L631.3 282.0L641.3 287.5L651.2 304.9L661.2 276.1L671.2 292.0L681.1 301.4L691.1 299.8L701.0 256.9L711.0 287.0L720.9 288.2L730.9 289.1L740.8 275.0L750.8 292.2L760.7 309.7L770.7 300.5L780.6 253.1L790.6 295.2L800.6 309.3L810.5 329.8" stroke="#0050d0" stroke-width="0.88"/>
<path d="M183.4 560.5L193.4 560.5L203.3 560.5L213.3 560.5L223.2 560.5L233.2 560.5L243.1 560.5L253.1 560.5L263.0 560.5L273.0 560.5L282.9 560.5L292.9 560.5L302.9 560.5L312.8 560.5L322.8 560.5L332.7 560.5L342.7 560.5L352.6 560.5L362.6 560.5L372.5 560.5L382.5 560.5L392.4 560.5L402.4 560.5L412.4 560.5L422.3 560.5L432.3 560.5L442.2 560.5L452.2 560.5L462.1 560.5L472.1 560.5L482.0 560.5L492.0 560.5L501.9 560.5L511.9 560.5L521.8 560.5L531.8 560.5L541.8 560.5L551.7 560.5L561.7 560.5L571.6 560.5L581.6 560.5L591.5 560.5L601.5 560.5L611.4 558.5L621.4 537.5L631.3 556.5L641.3 560.5L651.2 560.5L661.2 560.5L671.2 560.5L681.1 560.5L691.1 560.5L701.0 560.5L711.0 560.5L720.9 560.5L730.9 560.5L740.8 560.5L750.8 560.5L760.7 560.5L770.7 560.5L780.6 560.5L790.6 560.5L800.6 560.5L810.5 560.5" stroke="#0050d0" stroke-width="0.95"/>
<path d="M183.4 194.0L193.4 220.3L203.3 230.8L213.3 231.8L223.2 213.6L233.2 236.5L243.1 255.0L253.1 269.5L263.0 225.6L273.0 250.1L282.9 270.3L292.9 270.3L302.9 221.9L312.8 242.9L322.8 250.4L332.7 255.0L342.7 217.0L352.6 245.9L362.6 266.7L372.5 276.1L382.5 232.8L392.4 245.8L402.4 280.9L412.4 262.7L422.3 214.3L432.3 237.4L442.2 253.7L452.2 258.4L462.1 227.9L472.1 246.1L482.0 268.0L492.0 272.2L501.9 233.4L511.9 249.1L521.8 283.3L531.8 293.0L541.8 251.9L551.7 271.5L561.7 276.2L571.6 279.0L581.6 252.6L591.5 263.1L601.5 270.8L611.4 266.2L621.4 237.7L631.3 258.9L641.3 242.6L651.2 260.3L661.2 227.9L671.2 234.6L681.1 242.7L691.1 205.4L701.0 189.1L711.0 204.7L720.9 214.6L730.9 191.7L740.8 180.4L750.8 214.6L760.7 272.2L770.7 241.2L780.6 250.1L790.6 267.9L800.6 265.0L810.5 281.5" stroke="#0070d0" stroke-width="0.88"/>
<path d="M183.4 560.5L193.4 560.5L203.3 560.5L213.3 560.5L223.2 560.5L233.2 560.5L243.1 560.5L253.1 560.5L263.0 560.5L273.0 560.5L282.9 560.5L292.9 560.5L302.9 560.5L312.8 560.5L322.8 560.5L332.7 560.5L342.7 560.5L352.6 560.5L362.6 560.5L372.5 560.5L382.5 560.5L392.4 560.5L402.4 560.5L412.4 560.5L422.3 560.5L432.3 560.5L442.2 557.5L452.2 540.5L462.1 550.5L472.1 558.5L482.0 560.5L492.0 560.5L501.9 560.5L511.9 560.5L521.8 560.5L531.8 560.5L541.8 560.5L551.7 560.5L561.7 560.5L571.6 560.5L581.6 560.5L591.5 560.5L601.5 560.5L611.4 560.5L621.4 560.5L631.3 560.5L641.3 560.5L651.2 560.5L661.2 560.5L671.2 560.5L681.1 560.5L691.1 560.5L701.0 560.5L711.0 560.5L720.9 560.5L730.9 560.5L740.8 560.5L750.8 560.5L760.7 560.5L770.7 560.5L780.6 560.5L790.6 560.5L800.6 560.5L810.5 560.5" stroke="#0070d0" stroke-width="0.95"/>
<path d="M183.4 197.9L193.4 224.4L203.3 235.2L213.3 240.8L223.2 217.3L233.2 243.0L243.1 260.7L253.1 274.8L263.0 234.8L273.0 258.6L282.9 266.5L292.9 265.4L302.9 211.1L312.8 226.5L322.8 226.1L332.7 222.1L342.7 201.8L352.6 225.4L362.6 246.2L372.5 260.9L382.5 227.8L392.4 247.8L402.4 259.4L412.4 257.7L422.3 221.0L432.3 224.3L442.2 228.4L452.2 226.9L462.1 194.5L472.1 216.7L482.0 230.6L492.0 245.6L501.9 223.2L511.9 227.9L521.8 227.2L531.8 253.3L541.8 228.8L551.7 229.2L561.7 231.3L571.6 251.6L581.6 221.1L591.5 235.8L601.5 246.5L611.4 264.6L621.4 232.8L631.3 233.2L641.3 219.0L651.2 242.2L661.2 218.9L671.2 225.1L681.1 206.1L691.1 208.1L701.0 170.0L711.0 186.7L720.9 246.0L730.9 247.0L740.8 262.3L750.8 260.2L760.7 282.8L770.7 260.9L780.6 270.9L790.6 301.8L800.6 311.6L810.5 314.4" stroke="#00a0d0" stroke-width="0.88"/>
<path d="M183.4 560.5L193.4 560.5L203.3 560.5L213.3 560.5L223.2 541.5L233.2 560.5L243.1 560.5L253.1 560.5L263.0 560.5L273.0 560.5L282.9 560.5L292.9 560.5L302.9 560.5L312.8 560.5L322.8 560.5L332.7 560.5L342.7 560.5L352.6 560.5L362.6 560.5L372.5 560.5L382.5 560.5L392.4 560.5L402.4 560.5L412.4 560.5L422.3 560.5L432.3 560.5L442.2 560.5L452.2 560.5L462.1 560.5L472.1 560.5L482.0 560.5L492.0 560.5L501.9 560.5L511.9 560.5L521.8 560.5L531.8 560.5L541.8 560.5L551.7 560.5L561.7 560.5L571.6 560.5L581.6 560.5L591.5 560.5L601.5 560.5L611.4 560.5L621.4 560.5L631.3 560.5L641.3 560.5L651.2 560.5L661.2 560.5L671.2 560.5L681.1 560.5L691.1 560.5L701.0 560.5L711.0 560.5L720.9 560.5L730.9 560.5L740.8 556.5L750.8 508.5L760.7 556.5L770.7 560.5L780.6 560.5L790.6 560.5L800.6 560.5L810.5 560.5" stroke="#00a0d0" stroke-width="0.95"/>
<path d="M183.4 197.4L193.4 222.9L203.3 233.5L213.3 238.6L223.2 216.6L233.2 241.0L243.1 260.2L253.1 279.4L263.0 234.9L273.0 257.3L282.9 262.2L292.9 265.3L302.9 223.3L312.8 235.1L322.8 245.9L332.7 249.0L342.7 225.0L352.6 240.7L362.6 258.3L372.5 273.7L382.5 226.6L392.4 241.3L402.4 251.5L412.4 255.5L422.3 234.0L432.3 243.3L442.2 268.4L452.2 251.9L462.1 215.1L472.1 224.5L482.0 251.1L492.0 272.8L501.9 242.5L511.9 258.8L521.8 271.0L531.8 270.2L541.8 235.4L551.7 248.0L561.7 248.6L571.6 267.0L581.6 246.8L591.5 272.0L601.5 285.0L611.4 294.9L621.4 262.7L631.3 271.1L641.3 277.8L651.2 292.9L661.2 269.5L671.2 278.1L681.1 302.7L691.1 293.6L701.0 265.2L711.0 287.0L720.9 292.4L730.9 313.6L740.8 283.2L750.8 308.2L760.7 309.7L770.7 309.6L780.6 283.1L790.6 305.3L800.6 312.8L810.5 308.9" stroke="#00b8c8" stroke-width="0.88"/>
<path d="M183.4 560.5L193.4 560.5L203.3 560.5L213.3 560.5L223.2 560.5L233.2 560.5L243.1 560.5L253.1 560.5L263.0 560.5L273.0 560.5L282.9 560.5L292.9 560.5L302.9 560.5L312.8 560.5L322.8 560.5L332.7 560.5L342.7 560.5L352.6 560.5L362.6 550.5L372.5 552.5L382.5 557.5L392.4 558.5L402.4 560.5L412.4 560.5L422.3 560.5L432.3 560.5L442.2 560.5L452.2 560.5L462.1 560.5L472.1 560.5L482.0 560.5L492.0 560.5L501.9 560.5L511.9 560.5L521.8 560.5L531.8 560.5L541.8 560.5L551.7 560.5L561.7 560.5L571.6 560.5L581.6 560.5L591.5 560.5L601.5 560.5L611.4 560.5L621.4 560.5L631.3 560.5L641.3 560.5L651.2 560.5L661.2 560.5L671.2 560.5L681.1 560.5L691.1 548.5L701.0 512.5L711.0 548.5L720.9 560.5L730.9 560.5L740.8 560.5L750.8 560.5L760.7 560.5L770.7 560.5L780.6 556.5L790.6 540.5L800.6 514.5L810.5 537.5" stroke="#00b8c8" stroke-width="0.95"/>
<path d="M183.4 196.2L193.4 223.1L203.3 232.5L213.3 235.0L223.2 212.8L233.2 230.9L243.1 255.5L253.1 259.8L263.0 222.8L273.0 243.6L282.9 250.1L292.9 256.4L302.9 212.1L312.8 225.5L322.8 222.8L332.7 217.0L342.7 191.7L352.6 214.6L362.6 219.2L372.5 240.1L382.5 213.9L392.4 233.8L402.4 234.5L412.4 235.2L422.3 215.9L432.3 227.1L442.2 230.8L452.2 235.1L462.1 205.8L472.1 221.3L482.0 232.2L492.0 245.5L501.9 220.2L511.9 217.0L521.8 244.5L531.8 251.2L541.8 224.6L551.7 224.2L561.7 224.9L571.6 247.6L581.6 237.7L591.5 247.5L601.5 255.8L611.4 269.7L621.4 240.1L631.3 260.0L641.3 256.2L651.2 263.4L661.2 245.1L671.2 256.4L681.1 274.4L691.1 272.1L701.0 255.4L711.0 285.7L720.9 289.8L730.9 283.9L740.8 259.0L750.8 283.1L760.7 297.4L770.7 306.0L780.6 278.8L790.6 301.0L800.6 272.1L810.5 308.1" stroke="#00b890" stroke-width="0.88"/>
<path d="M183.4 189.3L193.4 215.5L203.3 219.3L213.3 224.4L223.2 212.7L233.2 241.4L243.1 252.4L253.1 269.7L263.0 223.6L273.0 244.3L282.9 250.4L292.9 252.6L302.9 210.6L312.8 237.7L322.8 241.3L332.7 232.5L342.7 200.9L352.6 216.6L362.6 237.6L372.5 247.6L382.5 220.5L392.4 240.5L402.4 275.5L412.4 242.3L422.3 221.1L432.3 240.6L442.2 274.5L452.2 249.0L462.1 224.3L472.1 249.7L482.0 257.5L492.0 295.4L501.9 253.8L511.9 275.8L521.8 286.3L531.8 285.0L541.8 241.9L551.7 261.8L561.7 274.7L571.6 290.2L581.6 255.9L591.5 265.1L601.5 275.2L611.4 288.7L621.4 244.2L631.3 256.5L641.3 257.5L651.2 264.0L661.2 251.1L671.2 260.2L681.1 271.5L691.1 288.5L701.0 261.6L711.0 252.3L720.9 252.4L730.9 281.2L740.8 267.6L750.8 296.8L760.7 317.3L770.7 297.5L780.6 277.0L790.6 296.0L800.6 310.7L810.5 308.0" stroke="#00b060" stroke-width="0.88"/>
<path d="M183.4 560.5L193.4 560.5L203.3 560.5L213.3 560.5L223.2 560.5L233.2 560.5L243.1 560.5L253.1 560.5L263.0 560.5L273.0 560.5L282.9 560.5L292.9 560.5L302.9 560.5L312.8 560.5L322.8 560.5L332.7 560.5L342.7 560.5L352.6 560.5L362.6 560.5L372.5 560.5L382.5 560.5L392.4 560.5L402.4 560.5L412.4 560.5L422.3 560.5L432.3 560.5L442.2 558.5L452.2 534.5L462.1 531.5L472.1 559.5L482.0 560.5L492.0 560.5L501.9 560.5L511.9 560.5L521.8 560.5L531.8 560.5L541.8 560.5L551.7 560.5L561.7 560.5L571.6 560.5L581.6 560.5L591.5 560.5L601.5 560.5L611.4 560.5L621.4 560.5L631.3 560.5L641.3 560.5L651.2 560.5L661.2 560.5L671.2 545.5L681.1 531.5L691.1 504.5L701.0 540.5L711.0 556.5L720.9 560.5L730.9 560.5L740.8 560.5L750.8 556.5L760.7 530.5L770.7 556.5L780.6 560.5L790.6 560.5L800.6 560.5L810.5 560.5" stroke="#00b060" stroke-width="0.95"/>
<path d="M183.4 195.2L193.4 221.8L203.3 231.9L213.3 233.8L223.2 214.4L233.2 237.9L243.1 238.5L253.1 255.2L263.0 222.8L273.0 242.8L282.9 243.9L292.9 241.6L302.9 197.8L312.8 212.7L322.8 211.0L332.7 198.5L342.7 164.4L352.6 188.0L362.6 208.4L372.5 223.9L382.5 213.8L392.4 228.6L402.4 231.9L412.4 235.7L422.3 212.9L432.3 227.0L442.2 233.1L452.2 232.3L462.1 199.1L472.1 209.2L482.0 218.8L492.0 216.5L501.9 197.9L511.9 205.3L521.8 220.3L531.8 228.2L541.8 211.0L551.7 225.9L561.7 233.6L571.6 243.0L581.6 219.4L591.5 247.5L601.5 261.7L611.4 242.3L621.4 217.1L631.3 208.9L641.3 210.0L651.2 212.9L661.2 198.4L671.2 219.8L681.1 211.2L691.1 192.6L701.0 160.6L711.0 162.6L720.9 181.9L730.9 188.9L740.8 225.2L750.8 225.9L760.7 236.8L770.7 243.4L780.6 212.5L790.6 243.6L800.6 278.2L810.5 250.7" stroke="#00b838" stroke-width="0.88"/>
<path d="M183.4 560.5L193.4 560.5L203.3 560.5L213.3 560.5L223.2 560.5L233.2 560.5L243.1 560.5L253.1 560.5L263.0 560.5L273.0 560.5L282.9 560.5L292.9 560.5L302.9 560.5L312.8 560.5L322.8 560.5L332.7 560.5L342.7 560.5L352.6 560.5L362.6 560.5L372.5 560.5L382.5 560.5L392.4 560.5L402.4 560.5L412.4 560.5L422.3 560.5L432.3 560.5L442.2 560.5L452.2 560.5L462.1 560.5L472.1 560.5L482.0 548.5L492.0 526.5L501.9 556.5L511.9 560.5L521.8 560.5L531.8 560.5L541.8 560.5L551.7 560.5L561.7 560.5L571.6 560.5L581.6 560.5L591.5 560.5L601.5 560.5L611.4 560.5L621.4 560.5L631.3 560.5L641.3 560.5L651.2 560.5L661.2 560.5L671.2 560.5L681.1 560.5L691.1 560.5L701.0 560.5L711.0 560.5L720.9 560.5L730.9 560.5L740.8 560.5L750.8 560.5L760.7 560.5L770.7 560.5L780.6 560.5L790.6 556.5L800.6 521.5L810.5 451.5" stroke="#00b838" stroke-width="0.95"/>
<path d="M183.4 196.1L193.4 223.8L203.3 237.0L213.3 247.4L223.2 225.3L233.2 251.2L243.1 266.7L253.1 282.2L263.0 237.7L273.0 254.2L282.9 266.7L292.9 267.4L302.9 221.2L312.8 243.5L322.8 240.0L332.7 253.4L342.7 219.4L352.6 243.5L362.6 267.4L372.5 281.0L382.5 232.0L392.4 250.6L402.4 268.2L412.4 248.0L422.3 214.1L432.3 235.2L442.2 249.7L452.2 241.8L462.1 200.2L472.1 216.9L482.0 237.8L492.0 253.9L501.9 224.0L511.9 237.2L521.8 249.4L531.8 269.1L541.8 238.4L551.7 262.1L561.7 261.7L571.6 269.5L581.6 242.7L591.5 252.7L601.5 257.6L611.4 256.6L621.4 231.8L631.3 244.1L641.3 264.2L651.2 269.2L661.2 263.3L671.2 273.4L681.1 276.9L691.1 265.3L701.0 258.0L711.0 265.1L720.9 279.9L730.9 278.2L740.8 265.8L750.8 283.1L760.7 279.3L770.7 250.4L780.6 187.7L790.6 219.3L800.6 236.3L810.5 214.6" stroke="#00c020" stroke-width="0.88"/>
<path d="M183.4 560.5L193.4 560.5L203.3 560.5L213.3 560.5L223.2 560.5L233.2 560.5L243.1 560.5L253.1 560.5L263.0 560.5L273.0 560.5L282.9 560.5L292.9 560.5L302.9 560.5L312.8 560.5L322.8 560.5L332.7 560.5L342.7 560.5L352.6 560.5L362.6 560.5L372.5 560.5L382.5 560.5L392.4 560.5L402.4 560.5L412.4 560.5L422.3 560.5L432.3 560.5L442.2 560.5L452.2 560.5L462.1 560.5L472.1 560.5L482.0 560.5L492.0 560.5L501.9 560.5L511.9 560.5L521.8 556.5L531.8 530.5L541.8 548.5L551.7 560.5L561.7 560.5L571.6 560.5L581.6 560.5L591.5 560.5L601.5 556.5L611.4 536.5L621.4 544.5L631.3 556.5L641.3 560.5L651.2 560.5L661.2 560.5L671.2 560.5L681.1 560.5L691.1 560.5L701.0 560.5L711.0 560.5L720.9 560.5L730.9 560.5L740.8 560.5L750.8 560.5L760.7 560.5L770.7 560.5L780.6 560.5L790.6 560.5L800.6 560.5L810.5 560.5" stroke="#00c020" stroke-width="0.95"/>
<path d="M183.4 196.4L193.4 221.8L203.3 233.1L213.3 238.3L223.2 217.2L233.2 243.0L243.1 258.1L253.1 263.3L263.0 222.2L273.0 243.0L282.9 254.8L292.9 259.9L302.9 210.6L312.8 225.5L322.8 227.9L332.7 224.9L342.7 198.9L352.6 212.4L362.6 231.8L372.5 233.5L382.5 211.7L392.4 227.5L402.4 229.2L412.4 229.6L422.3 212.1L432.3 212.3L442.2 215.9L452.2 206.8L462.1 179.2L472.1 189.9L482.0 184.2L492.0 184.1L501.9 179.7L511.9 192.2L521.8 203.8L531.8 209.6L541.8 201.9L551.7 195.1L561.7 197.1L571.6 217.4L581.6 207.7L591.5 206.4L601.5 195.8L611.4 194.4L621.4 183.8L631.3 203.2L641.3 220.5L651.2 224.5L661.2 200.6L671.2 211.9L681.1 214.8L691.1 236.4L701.0 213.1L711.0 213.4L720.9 231.2L730.9 244.0L740.8 256.3L750.8 300.7L760.7 318.3L770.7 310.0L780.6 291.5L790.6 306.2L800.6 301.0L810.5 289.7" stroke="#00cc00" stroke-width="0.88"/>
<path d="M183.4 560.5L193.4 560.5L203.3 560.5L213.3 560.5L223.2 560.5L233.2 560.5L243.1 560.5L253.1 560.5L263.0 560.5L273.0 560.5L282.9 560.5L292.9 560.5L302.9 560.5L312.8 560.5L322.8 560.5L332.7 560.5L342.7 560.5L352.6 560.5L362.6 560.5L372.5 560.5L382.5 560.5L392.4 560.5L402.4 560.5L412.4 560.5L422.3 560.5L432.3 560.5L442.2 560.5L452.2 560.5L462.1 560.5L472.1 560.5L482.0 560.5L492.0 560.5L501.9 560.5L511.9 560.5L521.8 560.5L531.8 560.5L541.8 560.5L551.7 560.5L561.7 560.5L571.6 560.5L581.6 560.5L591.5 560.5L601.5 560.5L611.4 560.5L621.4 560.5L631.3 560.5L641.3 560.5L651.2 560.5L661.2 560.5L671.2 544.5L681.1 556.5L691.1 550.5L701.0 537.5L711.0 556.5L720.9 560.5L730.9 560.5L740.8 560.5L750.8 560.5L760.7 560.5L770.7 560.5L780.6 560.5L790.6 560.5L800.6 560.5L810.5 560.5" stroke="#00cc00" stroke-width="0.95"/>
<path d="M183.4 196.1L193.4 221.3L203.3 230.0L213.3 228.0L223.2 207.7L233.2 237.7L243.1 257.0L253.1 266.7L263.0 220.7L273.0 245.4L282.9 255.1L292.9 262.8L302.9 205.4L312.8 215.0L322.8 221.0L332.7 220.9L342.7 185.1L352.6 207.4L362.6 216.1L372.5 230.6L382.5 206.4L392.4 217.0L402.4 221.9L412.4 216.1L422.3 203.5L432.3 217.0L442.2 222.8L452.2 226.0L462.1 171.8L472.1 193.0L482.0 217.4L492.0 241.5L501.9 221.2L511.9 248.0L521.8 254.5L531.8 256.0L541.8 222.2L551.7 219.3L561.7 224.1L571.6 228.0L581.6 222.2L591.5 224.1L601.5 226.0L611.4 227.7L621.4 217.7L631.3 243.0L641.3 259.0L651.2 273.0L661.2 231.2L671.2 262.0L681.1 274.0L691.1 276.0L701.0 231.2L711.0 229.7L720.9 227.4L730.9 230.9L740.8 234.0L750.8 271.0L760.7 305.0L770.7 313.8L780.6 275.1L790.6 285.8L800.6 280.0L810.5 273.2" stroke="#0000ff" stroke-width="2.8"/>
<path d="M183.4 560.5L193.4 560.5L203.3 560.5L213.3 560.5L223.2 560.5L233.2 560.5L243.1 560.5L253.1 560.5L263.0 560.5L273.0 560.5L282.9 560.5L292.9 560.5L302.9 560.5L312.8 560.5L322.8 560.5L332.7 560.5L342.7 560.5L352.6 557.5L362.6 556.5L372.5 559.5L382.5 560.5L392.4 560.5L402.4 560.5L412.4 560.5L422.3 560.5L432.3 560.5L442.2 560.5L452.2 560.5L462.1 560.5L472.1 560.5L482.0 560.5L492.0 560.5L501.9 560.5L511.9 560.5L521.8 560.5L531.8 560.5L541.8 560.5L551.7 560.5L561.7 560.5L571.6 560.5L581.6 560.5L591.5 560.5L601.5 560.5L611.4 560.5L621.4 560.5L631.3 560.5L641.3 560.5L651.2 560.5L661.2 560.5L671.2 560.5L681.1 560.5L691.1 560.5L701.0 560.5L711.0 557.5L720.9 551.5L730.9 555.5L740.8 557.5L750.8 560.5L760.7 560.5L770.7 560.5L780.6 560.5L790.6 558.5L800.6 557.5L810.5 549.5" stroke="#0000ff" stroke-width="2.8"/>
<path d="M183.4 196.1L193.4 221.8L203.3 232.3L213.3 236.7L223.2 216.4L233.2 241.2L243.1 258.0L253.1 269.6L263.0 225.1L273.0 244.5L282.9 252.2L292.9 259.4L302.9 210.6L312.8 225.5L322.8 226.0L332.7 222.8L342.7 195.8L352.6 215.1L362.6 233.5L372.5 243.2L382.5 215.1L392.4 233.5L402.4 237.9L412.4 240.6L422.3 214.1L432.3 227.7L442.2 230.6L452.2 234.0L462.1 203.0L472.1 217.0L482.0 233.5L492.0 245.2L501.9 220.7L511.9 236.5L521.8 248.7L531.8 255.9L541.8 230.8L551.7 244.8L561.7 254.5L571.6 263.2L581.6 238.2L591.5 250.5L601.5 257.2L611.4 262.8L621.4 239.5L631.3 255.5L641.3 264.1L651.2 270.5L661.2 248.7L671.2 262.0L681.1 271.0L691.1 275.5L701.0 249.0L711.0 263.0L720.9 271.8L730.9 278.5L740.8 257.5L750.8 275.0L760.7 285.8L770.7 288.7L780.6 267.0L790.6 284.8L800.6 293.5L810.5 296.4" stroke="#ffffff" stroke-width="2.8"/>
<path d="M183.4 560.5L193.4 560.5L203.3 560.5L213.3 560.5L223.2 557.2L233.2 560.4L243.1 560.5L253.1 560.5L263.0 560.5L273.0 560.5L282.9 560.5L292.9 560.5L302.9 560.5L312.8 560.5L322.8 560.5L332.7 560.2L342.7 560.2L352.6 557.5L362.6 558.4L372.5 560.3L382.5 560.4L392.4 560.4L402.4 558.3L412.4 555.6L422.3 553.8L432.3 558.3L442.2 558.1L452.2 555.8L462.1 556.3L472.1 558.3L482.0 555.7L492.0 554.6L501.9 556.1L511.9 555.8L521.8 556.9L531.8 556.9L541.8 557.2L551.7 557.9L561.7 555.6L571.6 558.1L581.6 556.8L591.5 557.8L601.5 558.1L611.4 558.0L621.4 556.5L631.3 557.4L641.3 558.0L651.2 556.4L661.2 558.3L671.2 557.5L681.1 555.0L691.1 554.8L701.0 553.5L711.0 558.0L720.9 558.0L730.9 558.0L740.8 558.0L750.8 549.3L760.7 551.5L770.7 557.9L780.6 555.8L790.6 554.4L800.6 553.9L810.5 553.3" stroke="#ffffff" stroke-width="2.8"/>
<path d="M183.4 201.0L193.4 226.1L203.3 239.6L213.3 230.9L223.2 219.3L233.2 224.5L243.1 242.5L253.1 256.1L263.0 210.6L273.0 243.5L282.9 253.2L292.9 255.1L302.9 208.7L312.8 219.5L322.8 219.5L332.7 213.5L342.7 191.9L352.6 210.5L362.6 218.2L372.5 223.0L382.5 207.5L392.4 238.0L402.4 243.5L412.4 233.0L422.3 207.0L432.3 220.0L442.2 224.8L452.2 227.7L462.1 206.5L472.1 229.7L482.0 251.0L492.0 269.3L501.9 233.5L511.9 253.8L521.8 276.0L531.8 284.8L541.8 242.2L551.7 263.5L561.7 273.2L571.6 281.9L581.6 234.5L591.5 260.0L601.5 279.0L611.4 296.5L621.4 258.5L631.3 281.6L641.3 267.0L651.2 255.5L661.2 217.7L671.2 237.0L681.1 250.5L691.1 251.5L701.0 228.3L711.0 237.5L720.9 240.5L730.9 242.8L740.8 230.3L750.8 260.0L760.7 270.0L770.7 287.7L780.6 255.6L790.6 282.9L800.6 295.5L810.5 306.0" stroke="#00e800" stroke-width="2.8"/>
</g>
<path d="M183.4 560.5L193.4 560.5L203.3 560.5L213.3 560.5L223.2 560.5L233.2 560.5L243.1 560.5L253.1 560.5L263.0 560.5L273.0 560.5L282.9 560.5L292.9 560.5L302.9 560.5L312.8 560.5L322.8 560.5L332.7 560.5L342.7 558.5L352.6 552.5L362.6 558.5L372.5 560.5L382.5 560.5L392.4 560.5L402.4 560.5L412.4 560.5L422.3 560.5L432.3 560.5L442.2 560.5L452.2 559.5L462.1 526.5L472.1 560.5L482.0 560.5L492.0 560.5L501.9 560.5L511.9 560.5L521.8 560.5L531.8 560.5L541.8 560.5L551.7 560.5L561.7 560.5L571.6 560.5L581.6 560.5L591.5 560.5L601.5 560.5L611.4 560.5L621.4 560.5L631.3 560.5L641.3 560.5L651.2 560.5L661.2 560.5L671.2 560.5L681.1 560.5L691.1 560.5L701.0 560.5L711.0 560.5L720.9 560.5L730.9 560.5L740.8 560.5L750.8 560.5L760.7 560.5L770.7 560.5L780.6 560.5L790.6 560.5L800.6 560.5L810.5 560.5" stroke="#00e800" stroke-width="2.8" fill="none" stroke-linejoin="round"/>
<path d="M163.5 324.5H810.5" stroke="#fff" stroke-width="1" fill="none"/>
<rect x="163.5" y="30.5" width="647.0" height="530.0" fill="none" stroke="#dedede" stroke-width="1"/>
<path d="M810.5 560.50h-5M810.5 547.50h-3M810.5 534.50h-5M810.5 520.50h-3M810.5 507.50h-5M810.5 494.50h-3M810.5 481.50h-5M810.5 467.50h-3M810.5 454.50h-5M810.5 441.50h-3M810.5 428.50h-5M810.5 414.50h-3M810.5 401.50h-5M810.5 388.50h-3M810.5 375.50h-5M810.5 361.50h-3M810.5 348.50h-5M810.5 335.50h-3M810.5 322.50h-5M810.5 308.50h-3M810.5 295.50h-5M810.5 282.50h-3M810.5 269.50h-5M810.5 255.50h-3M810.5 242.50h-5M810.5 229.50h-3M810.5 216.50h-5M810.5 202.50h-3M810.5 189.50h-5M810.5 176.50h-3M810.5 163.50h-5M810.5 149.50h-3M810.5 136.50h-5M810.5 123.50h-3M810.5 110.50h-5M810.5 96.50h-3M810.5 83.50h-5M810.5 70.50h-3M810.5 57.50h-5M810.5 43.50h-3M810.5 30.50h-5" stroke="#fff" stroke-width="1" fill="none"/>
<text x="154.3" y="562.7" font-size="10.67" text-anchor="end">-20</text>
<text x="154.3" y="503.8" font-size="10.67" text-anchor="end">-15</text>
<text x="154.3" y="444.9" font-size="10.67" text-anchor="end">-10</text>
<text x="154.3" y="386.0" font-size="10.67" text-anchor="end">-5</text>
<text x="154.3" y="327.1" font-size="10.67" text-anchor="end">0</text>
<text x="154.3" y="269.2" font-size="10.67" text-anchor="end">5</text>
<text x="154.3" y="210.3" font-size="10.67" text-anchor="end">10</text>
<text x="154.3" y="151.4" font-size="10.67" text-anchor="end">15</text>
<text x="154.3" y="92.5" font-size="10.67" text-anchor="end">20</text>
<text x="154.3" y="33.6" font-size="10.67" text-anchor="end">25</text>
<text x="817.6" y="563.2" font-size="10.67">0</text>
<text x="817.6" y="430.7" font-size="10.67">10</text>
<text x="817.6" y="298.2" font-size="10.67">20</text>
<text x="817.6" y="165.7" font-size="10.67">30</text>
<text x="817.6" y="33.2" font-size="10.67">40</text>
<text x="162.5" y="577" font-size="10.67" text-anchor="middle">12Dec 00z</text>
<text x="242.1" y="577" font-size="10.67" text-anchor="middle">14Dec 00z</text>
<text x="321.8" y="577" font-size="10.67" text-anchor="middle">16Dec 00z</text>
<text x="401.4" y="577" font-size="10.67" text-anchor="middle">18Dec 00z</text>
<text x="481.0" y="577" font-size="10.67" text-anchor="middle">20Dec 00z</text>
<text x="560.6" y="577" font-size="10.67" text-anchor="middle">22Dec 00z</text>
<text x="640.3" y="577" font-size="10.67" text-anchor="middle">24Dec 00z</text>
<text x="719.9" y="577" font-size="10.67" text-anchor="middle">26Dec 00z</text>
<text x="799.5" y="577" font-size="10.67" text-anchor="middle">28Dec 00z</text>
<text x="486" y="593" font-size="10.67" text-anchor="middle">Date (UTC)</text>
<text transform="translate(135.2,295) rotate(-90)" font-size="10.67" text-anchor="middle">2m Temp. (°C)</text>
<text transform="translate(843.2,296) rotate(-90)" font-size="10.67" text-anchor="middle">Precipitation (mm)</text>
<text x="435.5" y="16.6" font-size="16" font-weight="bold" text-anchor="middle" xml:space="preserve">Brussels  (BE)  2m Temp. &amp; Precipitation | Fri, 12Dec2025 06Z</text>
<text x="120.3" y="604.1" font-size="16">GFS Ensemble, 51N, 4.5E</text>
<text x="650.3" y="604.1" font-size="16">Wetterzentrale.de</text>
<path d="M0 40.9h8.8" stroke="#0010d0" stroke-width="1.7"/>
<text x="9.2" y="42.8" font-size="10.67">P1</text>
<path d="M54.2 40.9h10.5" stroke="#0050d0" stroke-width="1.7"/>
<text x="65.1" y="42.8" font-size="10.67">P2</text>
<path d="M0 55.9h8.8" stroke="#0070d0" stroke-width="1.7"/>
<text x="9.2" y="57.8" font-size="10.67">P3</text>
<path d="M54.2 55.9h10.5" stroke="#00a0d0" stroke-width="1.7"/>
<text x="65.1" y="57.8" font-size="10.67">P4</text>
<path d="M0 70.9h8.8" stroke="#00b8c8" stroke-width="1.7"/>
<text x="9.2" y="72.8" font-size="10.67">P5</text>
<path d="M54.2 70.9h10.5" stroke="#00b890" stroke-width="1.7"/>
<text x="65.1" y="72.8" font-size="10.67">P6</text>
<path d="M0 85.9h8.8" stroke="#00b060" stroke-width="1.7"/>
<text x="9.2" y="87.8" font-size="10.67">P7</text>
<path d="M54.2 85.9h10.5" stroke="#00b838" stroke-width="1.7"/>
<text x="65.1" y="87.8" font-size="10.67">P8</text>
<path d="M0 100.9h8.8" stroke="#00c020" stroke-width="1.7"/>
<text x="9.2" y="102.8" font-size="10.67">P9</text>
<path d="M54.2 100.9h10.5" stroke="#00cc00" stroke-width="1.7"/>
<text x="65.1" y="102.8" font-size="10.67">P10</text>
<path d="M0 115.9h8.8" stroke="#d0d000" stroke-width="1.7"/>
<text x="9.2" y="117.8" font-size="10.67">P11</text>
<path d="M54.2 115.9h10.5" stroke="#d8b800" stroke-width="1.7"/>
<text x="65.1" y="117.8" font-size="10.67">P12</text>
<path d="M0 130.9h8.8" stroke="#d8a000" stroke-width="1.7"/>
<text x="9.2" y="132.8" font-size="10.67">P13</text>
<path d="M54.2 130.9h10.5" stroke="#d89000" stroke-width="1.7"/>
<text x="65.1" y="132.8" font-size="10.67">P14</text>
<path d="M0 145.9h8.8" stroke="#d88000" stroke-width="1.7"/>
<text x="9.2" y="147.8" font-size="10.67">P15</text>
<path d="M54.2 145.9h10.5" stroke="#d07010" stroke-width="1.7"/>
<text x="65.1" y="147.8" font-size="10.67">P16</text>
<path d="M0 160.9h8.8" stroke="#c86010" stroke-width="1.7"/>
<text x="9.2" y="162.8" font-size="10.67">P17</text>
<path d="M54.2 160.9h10.5" stroke="#c05020" stroke-width="1.7"/>
<text x="65.1" y="162.8" font-size="10.67">P18</text>
<path d="M0 175.9h8.8" stroke="#b83020" stroke-width="1.7"/>
<text x="9.2" y="177.8" font-size="10.67">P19</text>
<path d="M54.2 175.9h10.5" stroke="#a81820" stroke-width="1.7"/>
<text x="65.1" y="177.8" font-size="10.67">P20</text>
<path d="M0 190.9h8.8" stroke="#0010d0" stroke-width="1.7"/>
<text x="9.2" y="192.8" font-size="10.67">P21</text>
<path d="M54.2 190.9h10.5" stroke="#0050d0" stroke-width="1.7"/>
<text x="65.1" y="192.8" font-size="10.67">P22</text>
<path d="M0 205.9h8.8" stroke="#0070d0" stroke-width="1.7"/>
<text x="9.2" y="207.8" font-size="10.67">P23</text>
<path d="M54.2 205.9h10.5" stroke="#00a0d0" stroke-width="1.7"/>
<text x="65.1" y="207.8" font-size="10.67">P24</text>
<path d="M0 220.9h8.8" stroke="#00b8c8" stroke-width="1.7"/>
<text x="9.2" y="222.8" font-size="10.67">P25</text>
<path d="M54.2 220.9h10.5" stroke="#00b890" stroke-width="1.7"/>
<text x="65.1" y="222.8" font-size="10.67">P26</text>
<path d="M0 235.9h8.8" stroke="#00b060" stroke-width="1.7"/>
<text x="9.2" y="237.8" font-size="10.67">P27</text>
<path d="M54.2 235.9h10.5" stroke="#00b838" stroke-width="1.7"/>
<text x="65.1" y="237.8" font-size="10.67">P28</text>
<path d="M0 250.9h8.8" stroke="#00c020" stroke-width="1.7"/>
<text x="9.2" y="252.8" font-size="10.67">P29</text>
<path d="M54.2 250.9h10.5" stroke="#00cc00" stroke-width="1.7"/>
<text x="65.1" y="252.8" font-size="10.67">P30</text>
<path d="M0 266.8h8.8" stroke="#0000ff" stroke-width="1.8"/><text x="9.2" y="268.7" font-size="10.67">Control</text>
<path d="M54.2 266.8h10.5" stroke="#fff" stroke-width="2.3"/><text x="65.1" y="268.7" font-size="10.67">Ens. mean</text>
<path d="M0 282.9h8.8" stroke="#00e800" stroke-width="1.8"/><text x="9.2" y="284.8" font-size="10.67">Oper</text>
</svg></body></html>
